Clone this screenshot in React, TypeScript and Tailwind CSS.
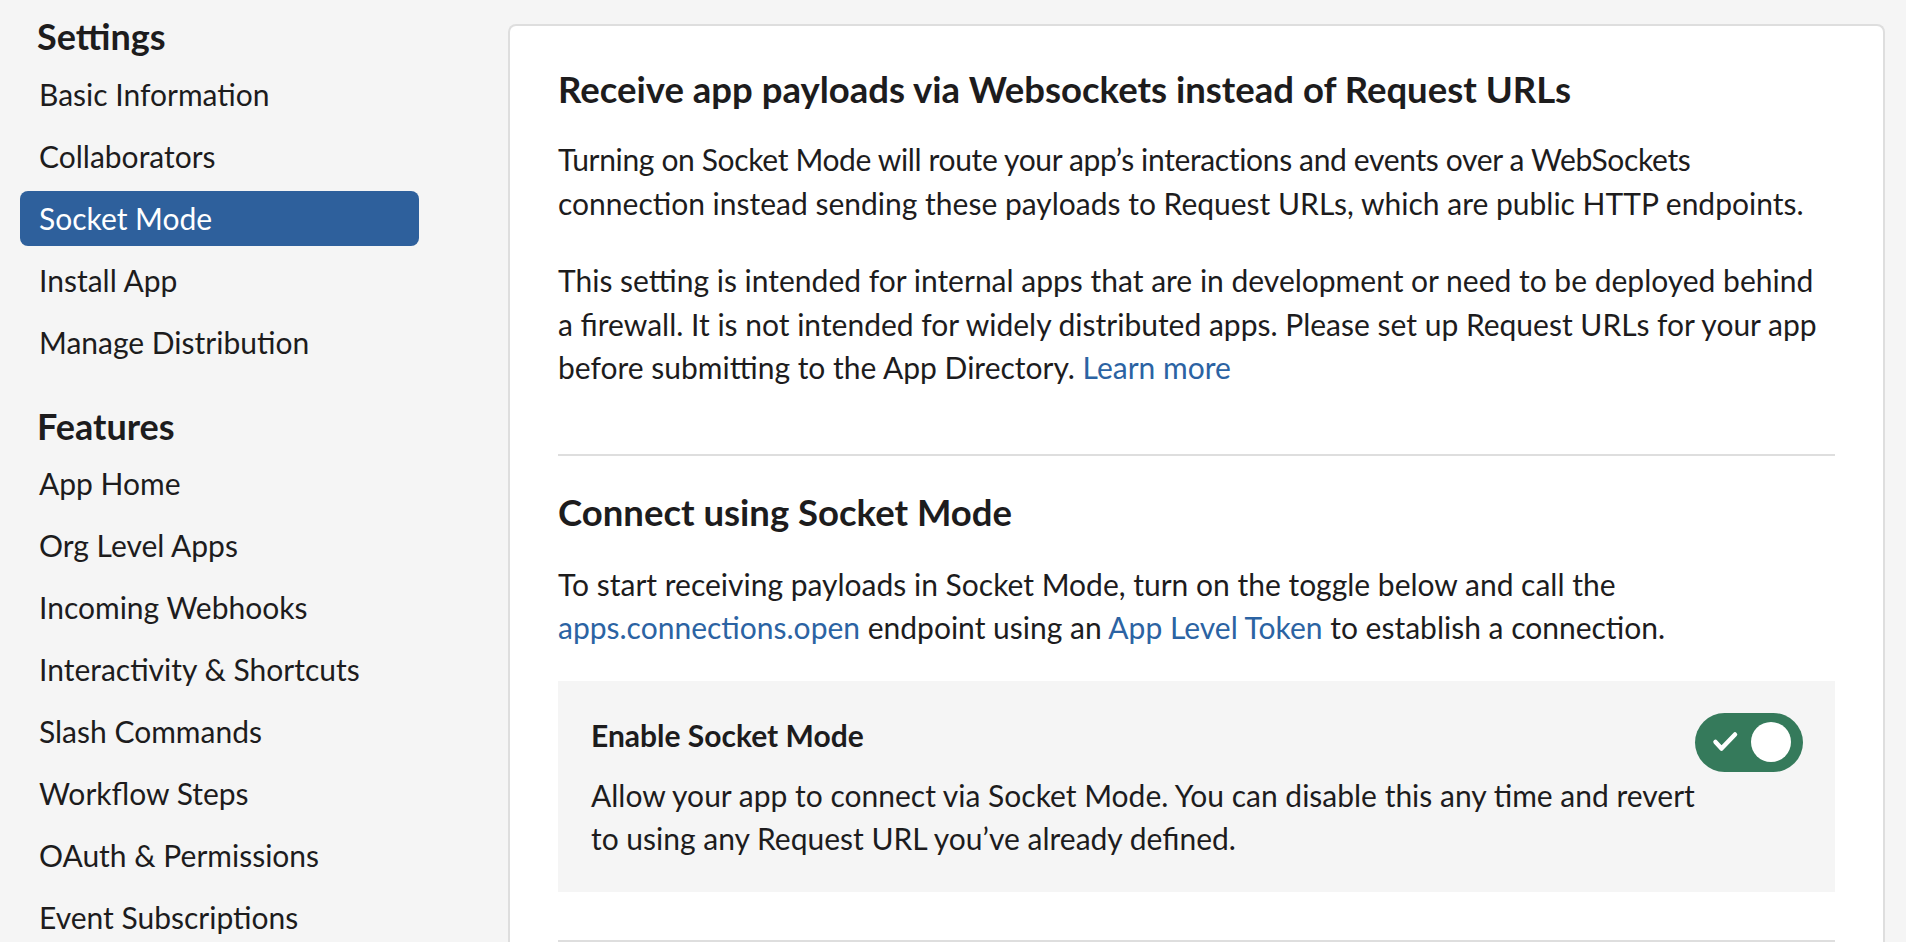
import React from "react";

const settingsItems = ["Basic Information", "Collaborators", "Socket Mode", "Install App", "Manage Distribution"];
const featureItems = [
  "App Home",
  "Org Level Apps",
  "Incoming Webhooks",
  "Interactivity & Shortcuts",
  "Slash Commands",
  "Workflow Steps",
  "OAuth & Permissions",
  "Event Subscriptions",
];

function NavItem({ label, active }: { label: string; active?: boolean }) {
  return (
    <div
      className={
        "h-[55px] w-[399px] rounded-[8px] pl-[19px] text-[30px] leading-[55px] whitespace-nowrap " +
        (active ? "bg-[#2e609c] text-white" : "text-[#1d1c1d]")
      }
    >
      {label}
    </div>
  );
}

function Toggle() {
  return (
    <div className="relative h-[59px] w-[108px] shrink-0 rounded-full bg-[#357a5b]">
      <svg className="absolute left-0 top-0" width="108" height="59" viewBox="0 0 108 59">
        <polyline
          points="20.5,29 26.5,35.5 40,21.5"
          fill="none"
          stroke="white"
          strokeWidth="4.5"
          strokeLinecap="round"
          strokeLinejoin="round"
        />
      </svg>
      <div className="absolute right-[12px] top-[9.5px] h-[40px] w-[40px] rounded-full bg-white" />
    </div>
  );
}

export default function App() {
  return (
    <div
      className="flex h-[942px] w-[1906px] overflow-hidden bg-[#f5f5f5] text-[#1d1c1d]"
      style={{ fontFamily: "Lato, 'Open Sans', sans-serif" }}
    >
      <aside className="w-[508px] shrink-0 pl-[20px]">
        <div className="mt-[16px] pl-[17px] text-[36px] font-bold leading-[41px]">Settings</div>
        <div className="mt-[10px] flex flex-col gap-[7px]">
          {settingsItems.map((s) => (
            <NavItem key={s} label={s} active={s === "Socket Mode"} />
          ))}
        </div>
        <div className="mt-[36px] pl-[17px] text-[36px] font-bold leading-[41px]">Features</div>
        <div className="mt-[9px] flex flex-col gap-[7px]">
          {featureItems.map((s) => (
            <NavItem key={s} label={s} />
          ))}
        </div>
      </aside>

      <main className="mr-[23px] mt-[24px] flex-1 rounded-t-[8px] border-2 border-b-0 border-[#dedede] bg-white px-[48px] pt-[42px]">
        <h1 className="text-[36.5px] font-bold leading-[42px]">Receive app payloads via Websockets instead of Request URLs</h1>
        <p className="mt-[28px] text-[30px] leading-[43.5px]">
          <span className="tracking-[-0.35px]">
            Turning on Socket Mode will route your app’s interactions and events over a WebSockets
          </span>
          <br />
          connection instead sending these payloads to Request URLs, which are public HTTP endpoints.
        </p>
        <p className="mt-[34px] text-[30px] leading-[43.5px]">
          This setting is intended for internal apps that are in development or need to be deployed behind
          <br />
          a firewall. It is not intended for widely distributed apps. Please set up Request URLs for your app
          <br />
          before submitting to the App Directory. <span className="text-[#2b63a3]">Learn more</span>
        </p>
        <div className="mt-[64px] h-[2px] bg-[#dedede]" />
        <h2 className="mt-[35px] text-[36.5px] font-bold leading-[42px]">Connect using Socket Mode</h2>
        <p className="mt-[30px] text-[30px] leading-[43.5px]">
          To start receiving payloads in Socket Mode, turn on the toggle below and call the
          <br />
          <span className="text-[#2b63a3]">apps.connections.open</span> endpoint using an{" "}
          <span className="text-[#2b63a3]">App Level Token</span> to establish a connection.
        </p>
        <div className="mt-[31px] flex items-start bg-[#f5f5f5] pb-[31px] pl-[33px] pr-[32px] pt-[32px]">
          <div className="min-w-0 flex-1">
            <div className="text-[30px] font-bold leading-[44px]">Enable Socket Mode</div>
            <p className="mt-[17px] whitespace-nowrap text-[30px] leading-[43.5px]">
              Allow your app to connect via Socket Mode. You can disable this any time and revert
              <br />
              to using any Request URL you’ve already defined.
            </p>
          </div>
          <Toggle />
        </div>
        <div className="mt-[48px] h-[2px] bg-[#dedede]" />
      </main>
    </div>
  );
}
